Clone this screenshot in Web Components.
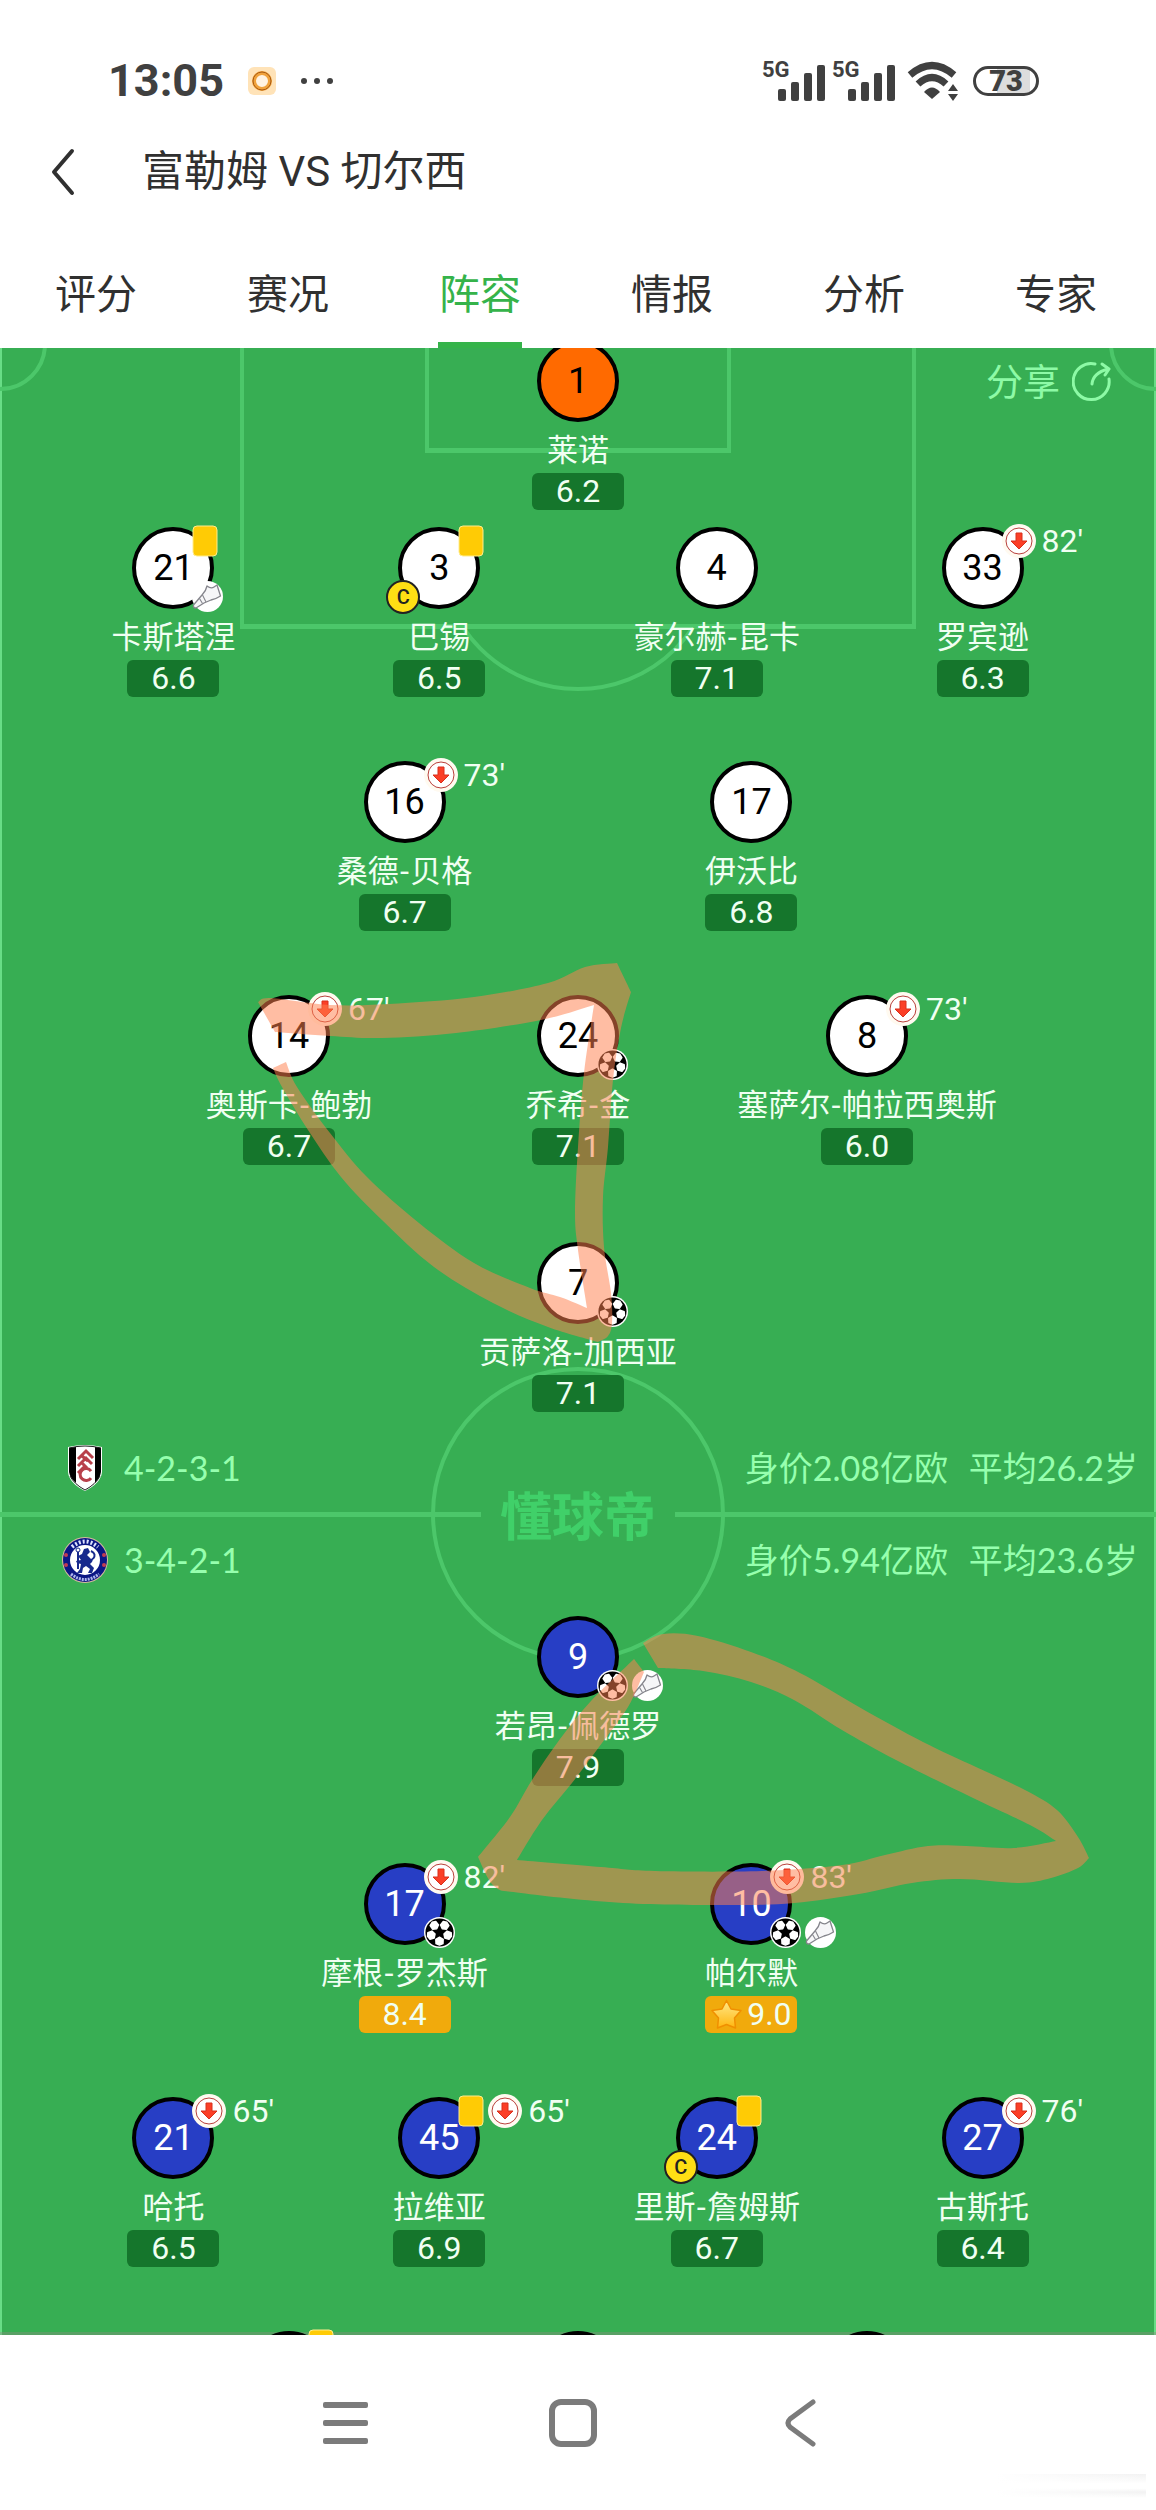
<!DOCTYPE html>
<html lang="zh-CN">
<head>
<meta charset="utf-8">
<meta name="viewport" content="width=device-width, initial-scale=1">
<title>富勒姆 VS 切尔西</title>
<style>
    html, body {
        margin: 0;
        height: 100%;
    }
    body {
        --digits: Roboto, "Noto Sans CJK SC", sans-serif;
        background: #fff;
        color: #303030;
        font-family: Lato, "Noto Sans CJK SC", sans-serif;
    }
</style>
</head>
<body>
<match-page>
    <status-bar slot="top" time="13:05" battery="73"></status-bar>
    <title-bar slot="top">富勒姆 VS 切尔西</title-bar>
    <tab-bar slot="top">
        <tab-item>评分</tab-item>
        <tab-item>赛况</tab-item>
        <tab-item active>阵容</tab-item>
        <tab-item>情报</tab-item>
        <tab-item>分析</tab-item>
        <tab-item>专家</tab-item>
    </tab-bar>

    <football-pitch>
        <share-button slot="over">分享</share-button>
        <lineup-row class="keeper">
            <player-node number="1" rating="6.2" kit="orange">莱诺</player-node>
        </lineup-row>
        <lineup-row class="four">
            <player-node number="21" rating="6.6" card assist>卡斯塔涅</player-node>
            <player-node number="3" rating="6.5" card captain>巴锡</player-node>
            <player-node number="4" rating="7.1">豪尔赫-昆卡</player-node>
            <player-node number="33" rating="6.3" off="82'">罗宾逊</player-node>
        </lineup-row>
        <lineup-row class="two">
            <player-node number="16" rating="6.7" off="73'">桑德-贝格</player-node>
            <player-node number="17" rating="6.8">伊沃比</player-node>
        </lineup-row>
        <lineup-row class="three loose">
            <player-node number="14" rating="6.7" off="67'">奥斯卡-鲍勃</player-node>
            <player-node number="24" rating="7.1" goal>乔希-金</player-node>
            <player-node number="8" rating="6.0" off="73'">塞萨尔-帕拉西奥斯</player-node>
        </lineup-row>
        <lineup-row class="striker">
            <player-node number="7" rating="7.1" goal>贡萨洛-加西亚</player-node>
        </lineup-row>

        <half-way>
            <team-info formation="4-2-3-1" value="身价2.08亿欧" age="平均26.2岁">
                <svg width="46" height="48" viewBox="0 0 46 48" role="img" aria-label="Fulham">
                    <path d="M6 3Q23 -1 40 3V28Q39 39 23 47Q7 39 6 28Z" fill="#fff"/>
                    <path d="M7 4Q10 3 14 3V39Q8 34 7 28Z"/>
                    <path d="M39 4Q36 3 33 3V39Q38 34 39 28Z"/>
                    <path d="M7 4Q23 0 39 4" fill="none" stroke="#222"/>
                    <path d="M8 32Q12 40 23 46Q34 40 38 32" fill="none" stroke="#222"/>
                    <path d="M16 15L24 7L31 14M20 12L26 17M16 22L24 14L30 20M20 19L25 24M16 29L22 23" fill="none" stroke="#b8414b" stroke-width="3"/>
                    <path d="M29 27A6 6 0 1 0 29 34" fill="none" stroke="#b8414b" stroke-width="3"/>
                </svg>
            </team-info>
            <team-info formation="3-4-2-1" value="身价5.94亿欧" age="平均23.6岁">
                <svg width="46" height="46" viewBox="0 0 46 46" role="img" aria-label="Chelsea">
                    <circle cx="23" cy="23" r="23" fill="#d9b9a0"/>
                    <circle cx="23" cy="23" r="22" fill="#0b1784"/>
                    <circle cx="23" cy="23" r="15" fill="#fff"/>
                    <path d="M20 17L22 12L26 11L28 15L25 18L29 22L32 20L30 25L28 27L32 31L30 36H26L28 32L24 29L21 31L20 36H15L18 32L19 27L15 26L14 24L19 23L16 19L18 18Z" fill="#172a8d"/>
                    <path d="M16 12V32M29 14Q35 17 31 22" fill="none" stroke="#172a8d" stroke-width="2"/>
                    <circle cx="16" cy="13" r="2" fill="#fff" stroke="#172a8d"/>
                    <g fill="#c33b51">
                        <circle cx="4" cy="18" r="2"/><circle cx="4" cy="28" r="2"/>
                        <circle cx="42" cy="18" r="2"/><circle cx="42" cy="28" r="2"/>
                    </g>
                    <path d="M10 10Q23 -1 36 10" fill="none" stroke="#dfe3ff" stroke-width="4" stroke-dasharray="2 2"/>
                    <path d="M9 37Q23 48 37 37" fill="none" stroke="#aeb6ee" stroke-width="3" stroke-dasharray="2 1"/>
                </svg>
            </team-info>
        </half-way>

        <lineup-row class="loose">
            <player-node number="9" rating="7.9" kit="blue" goal assist>若昂-佩德罗</player-node>
        </lineup-row>
        <lineup-row class="two">
            <player-node number="17" rating="8.4" kit="blue" off="82'" goal>摩根-罗杰斯</player-node>
            <player-node number="10" rating="9.0" kit="blue" off="83'" goal assist best>帕尔默</player-node>
        </lineup-row>
        <lineup-row class="four">
            <player-node number="21" rating="6.5" kit="blue" off="65'">哈托</player-node>
            <player-node number="45" rating="6.9" kit="blue" card off="65'">拉维亚</player-node>
            <player-node number="24" rating="6.7" kit="blue" card captain>里斯-詹姆斯</player-node>
            <player-node number="27" rating="6.4" kit="blue" off="76'">古斯托</player-node>
        </lineup-row>
        <lineup-row class="three">
            <player-node kit="blue" card></player-node>
            <player-node kit="blue"></player-node>
            <player-node kit="blue"></player-node>
        </lineup-row>
        <marker-strokes slot="over"></marker-strokes>
    </football-pitch>

    <system-nav slot="bottom"></system-nav>
</match-page>

<script>
'use strict';

// attaches an open shadow root and fills it with the given markup
function shadow(el, html) {
    el.attachShadow({ mode: 'open' }).innerHTML = html;
    return el.shadowRoot;
}

class MatchPage extends HTMLElement {
    constructor() {
        super();
        shadow(this, `
            <style>
                :host {
                    display: flex;
                    flex-direction: column;
                    height: 100vh;
                }
                main {
                    flex: 1;
                    min-height: 0;
                    overflow: hidden;
                }
            </style>
            <header><slot name="top"></slot></header>
            <main><slot></slot></main>
            <slot name="bottom"></slot>
        `);
    }
}
customElements.define('match-page', MatchPage);

class StatusBar extends HTMLElement {
    constructor() {
        super();
        const signal = `
            <span class="signal">
                <span class="net">5G</span>
                <svg width="48" height="36" viewBox="0 0 48 36" fill="#404040">
                    <rect x="0" y="24" width="8" height="12" rx="2"/>
                    <rect x="13" y="17" width="8" height="19" rx="2"/>
                    <rect x="26" y="8" width="8" height="28" rx="2"/>
                    <rect x="39" y="0" width="8" height="36" rx="2"/>
                </svg>
            </span>`;
        shadow(this, `
            <style>
                :host {
                    display: flex;
                    align-items: center;
                    justify-content: space-between;
                    height: 82px;
                    padding: 40px 117px 0 108px;
                    color: #404040;
                    font-family: var(--digits);
                }
                .side {
                    display: flex;
                    align-items: center;
                }
                .time {
                    font-size: 45px;
                    font-weight: 700;
                    line-height: 54px;
                    margin-right: 24px;
                }
                .sun {
                    margin-right: 24px;
                }
                .signals {
                    display: flex;
                    gap: 6px;
                    margin-right: 11px;
                }
                .signal {
                    display: flex;
                    position: relative;
                    align-items: flex-end;
                    justify-content: flex-end;
                    width: 64px;
                    height: 40px;
                }
                .net {
                    position: absolute;
                    top: -4px;
                    left: 0;
                    font-size: 22px;
                    font-weight: 700;
                    line-height: 26px;
                }
                .battery {
                    box-sizing: border-box;
                    width: 66px;
                    height: 30px;
                    margin-left: 14px;
                    border: 3px solid #404040;
                    border-radius: 15px;
                    background: linear-gradient(90deg, #fff 35%, #ddd 35%, #ddd 90%, #fff 90%);
                    font-size: 29px;
                    font-weight: 900;
                    line-height: 25px;
                    text-align: center;
                }
            </style>
            <div class="side">
                <span class="time"></span>
                <svg class="sun" width="28" height="28" viewBox="0 0 28 28">
                    <rect width="28" height="28" rx="6" fill="#ffe3b8"/>
                    <circle cx="14" cy="14" r="8" fill="#fff3e2" stroke="#f0a23c" stroke-width="4"/>
                    <circle cx="14" cy="14" r="9" fill="none" stroke="#a85a12" stroke-width="1"/>
                </svg>
                <svg width="34" height="8" viewBox="0 0 34 8" fill="#404040">
                    <circle cx="4" cy="4" r="3"/><circle cx="17" cy="4" r="3"/><circle cx="30" cy="4" r="3"/>
                </svg>
            </div>
            <div class="side">
                <span class="signals">${signal}${signal}</span>
                <svg width="52" height="40" viewBox="0 0 52 40">
                    <path d="M3 14Q25 -5 47 14" fill="none" stroke="#404040" stroke-width="7"/>
                    <path d="M11 23Q25 10 39 23" fill="none" stroke="#404040" stroke-width="7"/>
                    <path d="M17 31Q25 22 33 31L25 38Z" fill="#404040"/>
                    <path d="M41 30L46 23L51 30ZM41 33L46 40L51 33Z" fill="#404040"/>
                </svg>
                <span class="battery"></span>
            </div>
        `);
    }

    connectedCallback() {
        this.shadowRoot.querySelector('.time').textContent = this.getAttribute('time');
        this.shadowRoot.querySelector('.battery').textContent = this.getAttribute('battery');
    }
}
customElements.define('status-bar', StatusBar);

class TitleBar extends HTMLElement {
    constructor() {
        super();
        shadow(this, `
            <style>
                :host {
                    display: flex;
                    align-items: center;
                    height: 100px;
                    padding-left: 44px;
                }
                button {
                    display: flex;
                    width: 98px;
                    padding: 0;
                    border: 0;
                    background: none;
                }
                h1 {
                    margin: 0;
                    font-family: var(--digits);
                    font-size: 42px;
                    font-weight: 400;
                    line-height: 56px;
                }
            </style>
            <button type="button" aria-label="返回">
                <svg width="38" height="50" viewBox="0 0 38 50">
                    <path d="M28 4L10 25L28 46" fill="none" stroke="#303030" stroke-width="4" stroke-linecap="round" stroke-linejoin="round"/>
                </svg>
            </button>
            <h1><slot></slot></h1>
        `);
    }
}
customElements.define('title-bar', TitleBar);

class TabBar extends HTMLElement {
    constructor() {
        super();
        shadow(this, `
            <style>
                :host {
                    display: flex;
                    height: 126px;
                    padding-right: 4px;
                }
            </style>
            <slot></slot>
        `);
    }
}
customElements.define('tab-bar', TabBar);

class TabItem extends HTMLElement {
    constructor() {
        super();
        shadow(this, `
            <style>
                :host {
                    display: flex;
                    flex: 1;
                    justify-content: center;
                }
                button {
                    width: 84px;
                    padding: 18px 0 0;
                    border: 0;
                    background: none;
                    color: inherit;
                    font: inherit;
                    font-size: 41px;
                    line-height: 56px;
                    white-space: nowrap;
                }
                :host([active]) button {
                    color: #35b34a;
                    box-shadow: inset 0 -6px #35b34a;
                }
            </style>
            <button type="button"><slot></slot></button>
        `);
    }
}
customElements.define('tab-item', TabItem);

class FootballPitch extends HTMLElement {
    constructor() {
        super();
        shadow(this, `
            <style>
                :host {
                    --line: #4cc76a;
                    display: block;
                    position: relative;
                    box-sizing: border-box;
                    min-height: 100%;
                    overflow: hidden;
                    background: #37ae53;
                }
                .edge {
                    position: absolute;
                    inset: 0;
                    border: solid #68dd86;
                    border-width: 0 2px;
                }
                .area {
                    position: absolute;
                    top: 0;
                    left: 50%;
                    box-sizing: border-box;
                    border: solid var(--line);
                    border-width: 0 4px 5px;
                    transform: translateX(-50%);
                }
                .penalty {
                    width: 676px;
                    height: 281px;
                }
                .goal {
                    width: 306px;
                    height: 105px;
                }
                .arc {
                    position: absolute;
                    top: 278px;
                    left: 50%;
                    width: 280px;
                    height: 65px;
                    overflow: hidden;
                    transform: translateX(-50%);
                }
                .arc::after {
                    content: "";
                    position: absolute;
                    bottom: 0;
                    left: 0;
                    box-sizing: border-box;
                    width: 280px;
                    height: 280px;
                    border: 4px solid var(--line);
                    border-radius: 50%;
                }
                .corner {
                    position: absolute;
                    top: -51px;
                    box-sizing: border-box;
                    width: 94px;
                    height: 94px;
                    border: 4px solid var(--line);
                    border-radius: 50%;
                }
                .corner.left { left: -47px; }
                .corner.right { right: -47px; }
                .players {
                    position: relative;
                    margin-top: -8px;
                }
            </style>
            <div class="edge"></div>
            <div class="corner left"></div>
            <div class="corner right"></div>
            <div class="area penalty"></div>
            <div class="area goal"></div>
            <div class="arc"></div>
            <div class="players"><slot></slot></div>
            <slot name="over"></slot>
        `);
    }
}
customElements.define('football-pitch', FootballPitch);

class ShareButton extends HTMLElement {
    constructor() {
        super();
        shadow(this, `
            <style>
                :host {
                    position: absolute;
                    top: 10px;
                    right: 44px;
                }
                button {
                    display: flex;
                    align-items: center;
                    gap: 12px;
                    padding: 0;
                    border: 0;
                    background: none;
                    color: #8dfaa6;
                    font: inherit;
                    font-size: 37px;
                    line-height: 48px;
                }
            </style>
            <button type="button">
                <slot></slot>
                <svg width="40" height="40" viewBox="0 0 40 40" fill="none" stroke="#8dfaa6" stroke-width="3" stroke-linecap="round" stroke-linejoin="round">
                    <path d="M23 2A18 18 0 1 0 37 17"/>
                    <path d="M20 22Q21 11 36 7M30 2L37 7L33 13"/>
                </svg>
            </button>
        `);
    }
}
customElements.define('share-button', ShareButton);

class LineupRow extends HTMLElement {
    constructor() {
        super();
        shadow(this, `
            <style>
                :host {
                    display: flex;
                    position: relative;
                    z-index: 1;
                    justify-content: center;
                    padding-bottom: 64px;
                    --slot-width: 25%;
                }
                :host(.keeper) { padding-bottom: 17px; }
                :host(.striker) { padding-bottom: 10px; }
                :host(.loose) { padding-bottom: 77px; }
                :host(.two) { --slot-width: 30%; }
                :host(.four) { --slot-width: 23%; }
                :host(.four) ::slotted(:nth-child(2)) { margin-right: 1%; }
            </style>
            <slot></slot>
        `);
    }
}
customElements.define('lineup-row', LineupRow);

const CARD_ICON = `
    <svg width="26" height="32" viewBox="0 0 26 32">
        <rect x="1" y="1" width="24" height="30" rx="4" fill="#ffcb05" stroke="#ffec8c" stroke-width="1"/>
    </svg>`;

const OFF_ICON = `
    <svg width="34" height="34" viewBox="0 0 34 34">
        <circle cx="17" cy="17" r="17" fill="#fffaf0"/>
        <circle cx="17" cy="17" r="13" fill="#fff" stroke="#b9403b" stroke-width="1"/>
        <path d="M14 9H20V17H25L17 25L9 17H14Z" fill="#fb3f27" stroke="#d8301c" stroke-width="1" stroke-linejoin="round"/>
    </svg>`;

const BALL_ICON = `
    <svg width="31" height="31" viewBox="-16 -16 32 32">
        <circle r="16" fill="#fff"/>
        <circle r="14.5" fill="#000"/>
        <g fill="#fff" stroke="#fff" stroke-width="1.5" stroke-linejoin="round">
            ${[18, 90, 162, 234, 306].map(a => `<path transform="rotate(${a})" d="M4.8 0L7 -3.8L11.5 -3.6L13 0L11.5 3.6L7 3.8Z"/>`).join('')}
        </g>
    </svg>`;

const BOOT_ICON = `
    <svg width="31" height="31" viewBox="0 0 31 31">
        <circle cx="15.5" cy="15.5" r="15.5" fill="#fff"/>
        <path d="M1.5 24L10 14Q14 10 15 5Q19 8 22 6L25 4L28.5 15Q24 18 19 19L12 22L4 27Q1 27 1.5 24Z" fill="#f6f6f8" stroke="#85858c" stroke-width="1.3" stroke-linejoin="round"/>
        <path d="M7.5 17.5L10.5 22.5M10.5 14L14 21" fill="none" stroke="#85858c" stroke-width="1.1"/>
    </svg>`;

const STAR_ICON = `
    <svg width="31" height="31" viewBox="0 0 31 31">
        <defs>
            <linearGradient id="gold" x1="0" y1="0" x2="0" y2="1">
                <stop offset="0" stop-color="#ffe98a"/>
                <stop offset="1" stop-color="#ffb60f"/>
            </linearGradient>
        </defs>
        <path d="M15.5 1.5L20 10L30 11.5L23.5 19L24.5 29L15.5 25.5L6.5 29L7.5 19L1 11.5L11 10Z" fill="url(#gold)" stroke="#f08f00" stroke-width="1.5" stroke-linejoin="round"/>
    </svg>`;

class PlayerNode extends HTMLElement {
    constructor() {
        super();
        shadow(this, `
            <style>
                :host {
                    display: flex;
                    flex-direction: column;
                    align-items: center;
                    width: var(--slot-width);
                    color: #f0fff2;
                }
                .shirt {
                    position: relative;
                    box-sizing: border-box;
                    width: 82px;
                    height: 82px;
                    border: 4px solid #000;
                    border-radius: 50%;
                    background: #fff;
                    color: #000;
                    font-family: var(--digits);
                    font-size: 36px;
                    line-height: 74px;
                    text-align: center;
                }
                :host([kit="orange"]) .shirt { background: #ff6a00; }
                :host([kit="blue"]) .shirt {
                    background: #273ec5;
                    color: #fff;
                }
                svg { flex: none; }
                .badges {
                    position: absolute;
                    left: 56px;
                    display: flex;
                    align-items: center;
                    gap: 4px;
                }
                .badges.top {
                    top: -7px;
                    height: 34px;
                }
                .badges.bottom { top: 50px; }
                .minute {
                    margin-left: 2px;
                    color: #f0fff2;
                    font-size: 32px;
                    line-height: 32px;
                }
                .captain {
                    position: absolute;
                    top: 49px;
                    left: -16px;
                    box-sizing: border-box;
                    width: 34px;
                    height: 34px;
                    border: 2px solid #222;
                    border-radius: 50%;
                    background: #ffdf14;
                    color: #222;
                    font-size: 20px;
                    font-weight: 500;
                    line-height: 30px;
                }
                .name {
                    height: 44px;
                    margin: 5px 0 2px;
                    font-size: 31px;
                    line-height: 44px;
                    white-space: nowrap;
                }
                .rating {
                    display: flex;
                    align-items: center;
                    justify-content: center;
                    gap: 5px;
                    width: 92px;
                    height: 37px;
                    border-radius: 6px;
                    background: #15762c;
                    font-family: var(--digits);
                    font-size: 32px;
                    line-height: 37px;
                }
                .rating.high { background: #f1aa0c; }
            </style>
            <div class="shirt">
                <span class="number"></span>
                <span class="badges top"></span>
                <span class="badges bottom"></span>
            </div>
            <div class="name"><slot></slot></div>
            <div class="rating"></div>
        `);
    }

    connectedCallback() {
        this.render();
    }

    render() {
        const root = this.shadowRoot;
        const rating = this.getAttribute('rating') || '';
        const off = this.getAttribute('off');

        root.querySelector('.number').textContent = this.getAttribute('number') || '';

        let top = '';
        if (this.hasAttribute('card')) top += CARD_ICON;
        if (off) top += OFF_ICON + `<span class="minute">${off}</span>`;
        root.querySelector('.top').innerHTML = top;

        let bottom = '';
        if (this.hasAttribute('goal')) bottom += BALL_ICON;
        if (this.hasAttribute('assist')) bottom += BOOT_ICON;
        root.querySelector('.bottom').innerHTML = bottom;

        if (this.hasAttribute('captain')) {
            root.querySelector('.shirt').insertAdjacentHTML('beforeend', '<span class="captain">C</span>');
        }

        const box = root.querySelector('.rating');
        box.innerHTML = (this.hasAttribute('best') ? STAR_ICON : '') + `<span>${rating}</span>`;
        box.classList.toggle('high', Number(rating) >= 8);
    }
}
customElements.define('player-node', PlayerNode);

class HalfWay extends HTMLElement {
    constructor() {
        super();
        shadow(this, `
            <style>
                :host {
                    display: block;
                    position: relative;
                    margin-bottom: 10px;
                }
                .circle {
                    position: absolute;
                    top: 50%;
                    left: 50%;
                    box-sizing: border-box;
                    width: 294px;
                    height: 294px;
                    border: 4px solid var(--line);
                    border-radius: 50%;
                    transform: translate(-50%, -50%);
                }
                .line {
                    position: absolute;
                    top: 50%;
                    left: 0;
                    right: 0;
                    display: flex;
                    align-items: center;
                    transform: translateY(-50%);
                }
                .line::before,
                .line::after {
                    content: "";
                    flex: 1;
                    height: 5px;
                    background: var(--line);
                }
                .brand {
                    width: 194px;
                    color: #40d069;
                    font-family: "Noto Sans CJK SC", sans-serif;
                    font-size: 52px;
                    font-weight: 700;
                    line-height: 60px;
                    text-align: center;
                }
            </style>
            <div class="circle"></div>
            <div class="line"><span class="brand">懂球帝</span></div>
            <slot></slot>
        `);
    }
}
customElements.define('half-way', HalfWay);

class TeamInfo extends HTMLElement {
    constructor() {
        super();
        shadow(this, `
            <style>
                :host {
                    display: flex;
                    align-items: center;
                    height: 92px;
                    padding: 0 18px 0 62px;
                    color: #96ffae;
                    font-size: 34px;
                    line-height: 48px;
                }
                .formation {
                    flex: 1;
                    margin-left: 16px;
                }
                .value {
                    min-width: 206px;
                    margin-right: 18px;
                }
            </style>
            <slot></slot>
            <span class="formation"></span>
            <span class="value"></span>
            <span class="age"></span>
        `);
    }

    connectedCallback() {
        for (const key of ['formation', 'value', 'age']) {
            this.shadowRoot.querySelector('.' + key).textContent = this.getAttribute(key);
        }
    }
}
customElements.define('team-info', TeamInfo);

// Each shape is a list of runs: a run is drawn as a smooth curve,
// and two runs meet in a sharp corner.
const STROKES = [
    [
        [[258, 654], [271, 650], [330, 657], [389, 656], [474, 649], [548, 635], [585, 619], [617, 615]],
        [[617, 615], [631, 644]],
        [[631, 644], [621, 680], [613, 732], [608, 799], [603, 849], [604, 899], [611, 945], [612, 975], [608, 988], [598, 994]],
        [[598, 994], [548, 979], [493, 955], [434, 919], [382, 872], [341, 829], [308, 782], [282, 739], [273, 720]],
        [[273, 720], [286, 714]],
        [[286, 714], [297, 739], [330, 785], [367, 829], [419, 875], [474, 915], [530, 940], [560, 949], [587, 960]],
        [[587, 960], [578, 902], [575, 865], [578, 799], [584, 725], [594, 657]],
        [[594, 657], [541, 672], [456, 685], [382, 690], [330, 688], [275, 684]]
    ],
    [
        [[643, 1295], [663, 1286], [698, 1288], [751, 1304], [800, 1325], [859, 1359], [923, 1394], [976, 1419], [1025, 1442], [1057, 1462], [1078, 1489], [1089, 1510]],
        [[1089, 1510], [1078, 1520], [1051, 1530], [1019, 1535], [960, 1531], [912, 1535], [859, 1546], [794, 1555], [730, 1557], [623, 1555], [521, 1545], [494, 1538], [478, 1509]],
        [[478, 1509], [510, 1469], [532, 1432], [560, 1391], [591, 1353], [634, 1311]],
        [[634, 1311], [644, 1324]],
        [[644, 1324], [628, 1359], [599, 1399], [572, 1435], [542, 1472], [517, 1512]],
        [[517, 1512], [601, 1519], [655, 1523], [762, 1523], [842, 1517], [885, 1507], [928, 1498], [966, 1498], [1014, 1500], [1056, 1493]],
        [[1056, 1493], [1030, 1477], [971, 1449], [896, 1412], [842, 1382], [794, 1352], [751, 1334], [703, 1323], [658, 1320]]
    ]
];

function smooth(run) {
    let d = '';
    for (let i = 0; i < run.length - 1; i++) {
        const a = run[i - 1] || run[i];
        const b = run[i];
        const c = run[i + 1];
        const e = run[i + 2] || c;
        d += `C${b[0] + (c[0] - a[0]) / 6} ${b[1] + (c[1] - a[1]) / 6} ${c[0] - (e[0] - b[0]) / 6} ${c[1] - (e[1] - b[1]) / 6} ${c[0]} ${c[1]}`;
    }
    return d;
}

class MarkerStrokes extends HTMLElement {
    constructor() {
        super();
        const paths = STROKES.map(runs => {
            const start = runs[0][0];
            const d = runs.map((run, i) => (i ? `L${run[0]}` : '') + smooth(run)).join('');
            return `<path d="M${start}${d}Z"/>`;
        });
        shadow(this, `
            <style>
                :host {
                    position: absolute;
                    top: 0;
                    left: 0;
                    right: 0;
                    z-index: 2;
                    pointer-events: none;
                }
                svg {
                    display: block;
                    width: 100%;
                    height: 1987px;
                }
            </style>
            <svg viewBox="0 0 1156 1987" preserveAspectRatio="none" fill="#ff804e" fill-opacity="0.52">${paths.join('')}</svg>
        `);
    }
}
customElements.define('marker-strokes', MarkerStrokes);

class SystemNav extends HTMLElement {
    constructor() {
        super();
        shadow(this, `
            <style>
                :host {
                    display: flex;
                    position: relative;
                    align-items: center;
                    justify-content: center;
                    gap: 178px;
                    height: 175px;
                    padding-right: 10px;
                    background: #fff;
                    box-shadow: 0 -3px rgba(140, 140, 130, 0.4);
                }
                button {
                    display: flex;
                    padding: 0;
                    border: 0;
                    background: none;
                }
                .smudge {
                    position: absolute;
                    right: 10px;
                    bottom: 12px;
                    width: 150px;
                    height: 24px;
                    background: linear-gradient(90deg, #fff, rgba(255, 255, 255, 0)), linear-gradient(#f2f2f2, #fff 40%, #fff 60%, #f2f2f2 75%, #fff);
                }
            </style>
            <button type="button" aria-label="菜单">
                <svg width="50" height="50" viewBox="0 0 50 50" fill="#7b7b7b">
                    <rect x="3" y="4" width="45" height="6" rx="2"/>
                    <rect x="3" y="22" width="45" height="6" rx="2"/>
                    <rect x="3" y="40" width="45" height="6" rx="2"/>
                </svg>
            </button>
            <button type="button" aria-label="主屏幕">
                <svg width="50" height="50" viewBox="0 0 50 50">
                    <rect x="4" y="4" width="42" height="42" rx="9" fill="none" stroke="#7b7b7b" stroke-width="6"/>
                </svg>
            </button>
            <button type="button" aria-label="返回">
                <svg width="50" height="50" viewBox="0 0 50 50">
                    <path d="M37 4L14 21Q10 25 14 29L37 46" fill="none" stroke="#7b7b7b" stroke-width="5" stroke-linecap="round"/>
                </svg>
            </button>
            <span class="smudge"></span>
        `);
    }
}
customElements.define('system-nav', SystemNav);
</script>
</body>
</html>
